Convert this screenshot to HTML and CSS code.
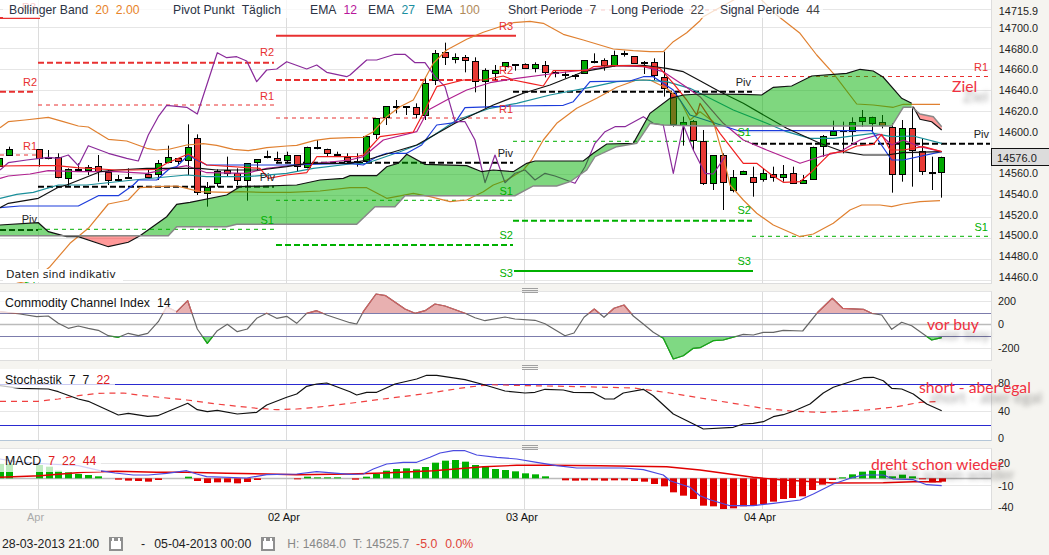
FILE: index.html
```html
<!DOCTYPE html>
<html lang="en">
<head>
    <meta charset="UTF-8">
    <meta name="viewport" content="width=device-width, initial-scale=1.0">
    <title>Chart</title>
    <link rel="stylesheet" href="styles.css">
</head>
<body>
    <div class="panel panel-price">
        <svg class="plot" id="price-plot" viewBox="0 0 991 283"></svg>
        <svg class="axis" id="price-axis" viewBox="991 0 58 283"></svg>
        <div class="legend legend-top">
            <div class="legend-item"><span>Bollinger Band</span><span class="c-orange">20</span><span class="c-orange">2.00</span></div>
            <div class="legend-item"><span>Pivot Punkt</span><span>Täglich</span></div>
            <div class="legend-item"><span>EMA</span><span class="c-magenta">12</span></div>
            <div class="legend-item"><span>EMA</span><span class="c-teal">27</span></div>
            <div class="legend-item"><span>EMA</span><span class="c-tan">100</span></div>
            <div class="legend-item"><span>Short Periode</span><span class="c-grey">7</span></div>
            <div class="legend-item"><span>Long Periode</span><span class="c-grey">22</span></div>
            <div class="legend-item"><span>Signal Periode</span><span class="c-grey">44</span></div>
        </div>
        <div class="disclaimer">Daten sind indikativ</div>
        <div class="last-price">14576.0</div>
        <div class="note note-ziel">Ziel</div>
    </div>

    <div class="gutter"><div class="grip"></div></div>

    <div class="panel panel-cci">
        <svg class="plot" id="cci-plot" viewBox="0 292 991 68"></svg>
        <svg class="axis" id="cci-axis" viewBox="991 292 58 68"></svg>
        <div class="legend legend-sub"><span>Commodity Channel Index</span><span>14</span></div>
        <div class="note note-buy">vor buy</div>
    </div>

    <div class="gutter"><div class="grip"></div></div>

    <div class="panel panel-stoch">
        <svg class="plot" id="stoch-plot" viewBox="0 370 991 71"></svg>
        <svg class="axis" id="stoch-axis" viewBox="991 370 58 71"></svg>
        <div class="legend legend-sub"><span>Stochastik</span><span>7</span><span>7</span><span class="c-red">22</span></div>
        <div class="note note-short">short - aber egal</div>
    </div>

    <div class="gutter"><div class="grip"></div></div>

    <div class="panel panel-macd">
        <svg class="plot" id="macd-plot" viewBox="0 450 991 60"></svg>
        <svg class="axis" id="macd-axis" viewBox="991 450 58 60"></svg>
        <div class="legend legend-sub"><span>MACD</span><span class="c-red">7</span><span class="c-red">22</span><span class="c-red">44</span></div>
        <div class="note note-dreht">dreht schon wieder</div>
    </div>

    <div class="time-axis">
        <span class="tick tick-first">Apr</span>
        <span class="tick">02 Apr</span>
        <span class="tick">03 Apr</span>
        <span class="tick">04 Apr</span>
    </div>

    <div class="footer">
        <span>28-03-2013 21:00</span>
        <svg class="cal" viewBox="0 0 14 14"><rect width="14" height="14" fill="#8f8f8f"/><rect x="2" y="4" width="10" height="8" fill="#fff"/><rect x="3" y="1" width="2" height="3" fill="#fff"/><rect x="9" y="1" width="2" height="3" fill="#fff"/></svg>
        <span class="dash">-</span>
        <span>05-04-2013 00:00</span>
        <svg class="cal" viewBox="0 0 14 14"><rect width="14" height="14" fill="#8f8f8f"/><rect x="2" y="4" width="10" height="8" fill="#fff"/><rect x="3" y="1" width="2" height="3" fill="#fff"/><rect x="9" y="1" width="2" height="3" fill="#fff"/></svg>
        <span class="muted">H: 14684.0</span>
        <span class="muted">T: 14525.7</span>
        <span class="loss">-5.0</span>
        <span class="loss">0.0%</span>
    </div>

    <script src="chart.js"></script>
</body>
</html>
```

FILE: styles.css
```css
body {
    margin: 0;
    width: 1049px;
    height: 555px;
    overflow: hidden;
    background-color: #f5f4f0;
    font-family: "Liberation Sans", Arial, sans-serif;
    font-size: 12px;
    color: #222;
    display: flex;
    flex-direction: column;
}
svg {
    display: block;
}
.panel {
    position: relative;
    display: flex;
    flex: none;
}
.panel-price { height: 283px; }
.panel-cci { height: 68px; }
.panel-stoch { height: 71px; }
.panel-macd { height: 60px; }
.plot {
    width: 991px;
    height: 100%;
    background-color: #fff;
    border-bottom: 1px solid #ddd;
    border-right: 1px solid #ddd;
    box-sizing: content-box;
    flex: none;
}
.panel-cci .plot, .panel-macd .plot {
    border-top: 1px solid #e4e4e4;
    margin-top: -1px;
}
.panel-stoch .plot {
    border-bottom-color: #b4c6d8;
}
.axis {
    width: 57px;
    height: 100%;
    flex: none;
    overflow: visible;
}
.axis text {
    font-size: 11px;
    fill: #222;
}
.gutter {
    height: 9px;
    flex: none;
}
.grip {
    width: 16px;
    height: 5px;
    margin: 5px 0 0 522px;
    position: relative;
    z-index: 1;
    background: repeating-linear-gradient(to bottom, #a0a0a0 0, #a0a0a0 1px, transparent 1px, transparent 2px);
}

/* legends */
.legend {
    position: absolute;
    white-space: nowrap;
    color: #2b3344;
    background-color: rgba(255,255,255,0.75);
}
.legend-top {
    top: 0;
    left: 3px;
    width: 820px;
    height: 18px;
    line-height: 21px;
    padding-left: 6px;
    box-sizing: border-box;
    font-size: 12.2px;
    display: grid;
    grid-template-columns: 164px 137px 58px 58px 82px 103px 109px auto;
}
.legend-item {
    display: flex;
    gap: 7px;
}
.legend-sub {
    top: 0;
    left: 0;
    display: flex;
    gap: 7px;
    padding-left: 5px;
    padding-right: 5px;
    line-height: 15px;
    font-size: 12.3px;
    color: #111;
}
.panel-cci .legend-sub { padding-top: 4px; padding-bottom: 2px; }
.panel-stoch .legend-sub { padding-top: 4px; padding-bottom: 0; }
.panel-macd .legend-sub { padding-top: 5px; padding-bottom: 3px; }
.c-orange { color: #e8842a; }
.c-magenta { color: #b8169a; }
.c-teal { color: #1b8fa0; }
.c-tan { color: #b08a5a; }
.c-grey { color: #444; }
.c-red { color: #e02020; }

.disclaimer {
    position: absolute;
    left: 3px;
    top: 269px;
    width: 120px;
    height: 13px;
    padding-left: 3px;
    box-sizing: border-box;
    background-color: #fff;
    font-family: "DejaVu Sans", Verdana, sans-serif;
    font-size: 11px;
    line-height: 12px;
    white-space: nowrap;
}
.last-price {
    position: absolute;
    left: 991px;
    top: 148px;
    width: 58px;
    height: 18px;
    padding-left: 5px;
    box-sizing: border-box;
    background-color: #dcdcdc;
    border: 1px solid #111;
    border-right: none;
    font-size: 11px;
    line-height: 18px;
}

/* hand written notes */
.note {
    position: absolute;
    font-family: Lato, "Liberation Sans", sans-serif;
    font-size: 15.7px;
    line-height: 18px;
    color: #f03040;
    white-space: nowrap;
    text-shadow: 11px 10px 5px rgba(0,0,0,0.35);
}
.note-ziel { left: 952px; top: 77px; }
.note-buy { left: 927px; top: 23px; }
.note-short { left: 919px; top: 9px; }
.note-dreht { left: 871px; top: 6px; }

/* time axis and footer */
.time-axis {
    display: flex;
    height: 21px;
    flex: none;
    padding-top: 1px;
    box-sizing: border-box;
    line-height: 15px;
    font-size: 11px;
}
.tick {
    width: 238px;
    color: #111;
    flex: none;
}
.tick-first {
    color: #aaa;
    margin-left: 27px;
    width: 241px;
}
.footer {
    display: flex;
    align-items: center;
    height: 25px;
    padding: 2px 0 0 2px;
    box-sizing: border-box;
    font-size: 12.3px;
    color: #222;
}
.cal {
    width: 14px;
    height: 14px;
    margin: 0 18px 0 10px;
    flex: none;
}
.dash {
    margin-right: 9px;
}
.cal + .muted {
    margin-left: -6px;
}
.muted {
    color: #888;
    margin-right: 7px;
    font-size: 12px;
}
.loss {
    color: #e0453a;
    margin-right: 8px;
}

/* chart strokes */
.grid { stroke: #e6e6e6; stroke-width: 1; }
.vgrid { stroke: #dcdcdc; stroke-width: 1; }
.band { stroke: #7c7cac; stroke-width: 1; }
.zero { stroke: #bbb; stroke-width: 1.5; }
.blue-rule { stroke: #2a2ad0; stroke-width: 1; }
.line { fill: none; stroke-width: 1.2; stroke-linejoin: round; }
.l-orange { stroke: #e08030; }
.l-purple { stroke: #8a2a9a; }
.l-red { stroke: #f02020; }
.l-magenta { stroke: #b0208f; }
.l-blue { stroke: #1c3cdb; }
.l-black { stroke: #111; }
.l-teal { stroke: #1a8f9a; }
.l-grey { stroke: #666; }
.l-cci-up { stroke: #d06060; }
.l-cci-down { stroke: #10b010; }
.l-macd-blue { stroke: #4a4ae0; }
.l-macd-red { stroke: #e00000; stroke-width: 1.4; }
.l-dash-red { stroke: #f04040; stroke-dasharray: 6 5; }
.cloud-up { fill: rgba(0,176,0,0.5); stroke: none; }
.cloud-down { fill: rgba(255,0,0,0.4); stroke: none; }
.edge-a { fill: none; stroke: #111; stroke-width: 1.2; }
.edge-b { fill: none; stroke: #888; stroke-width: 1.4; }
.cci-up { fill: #e8b0b0; }
.cci-down { fill: #7fd983; }
.wick { stroke: #000; stroke-width: 1; }
.body { stroke: #000; stroke-width: 1; }
.body-g { fill: #00a800; }
.body-r { fill: #e83a35; }
.body-d { fill: #000; }
.bar-g { fill: #00b000; }
.bar-r { fill: #e00000; }
.piv { fill: none; }
.piv-thin { stroke-width: 1; stroke-dasharray: 4 4; }
.piv-thick { stroke-width: 2; stroke-dasharray: 6 3; }
.piv-solid { stroke-width: 2; }
.piv-red { stroke: #e83030; }
.piv-green { stroke: #00b000; }
.piv-black { stroke: #000; }
.piv-label { font-size: 11px; text-anchor: end; }
.tl-red { fill: #e83030; }
.tl-green { fill: #00b000; }
.tl-black { fill: #222; }
```

FILE: chart.js
```js
// Coordinates below were read off at 3x, so strip() scales them down to page pixels
function strip(xOff, yOff, pts) {
    const out = [];
    for (let i = 0; i < pts.length; i += 2) {
        out.push([xOff + pts[i] / 3, yOff + pts[i + 1] / 3]);
    }
    return out;
}
function pointsAttr(pts) {
    return pts.map(p => p[0].toFixed(1) + ',' + p[1].toFixed(1)).join(' ');
}
function polyline(pts, cls) {
    return `<polyline class="${cls}" points="${pointsAttr(pts)}"/>`;
}
function hline(y, x1, x2, cls) {
    return `<line class="${cls}" x1="${x1}" x2="${x2}" y1="${y}" y2="${y}"/>`;
}
function vlines(y1, y2) {
    return [38.5, 286.5, 524.5, 762.5].map(x =>
        `<line class="vgrid" x1="${x}" x2="${x}" y1="${y1}" y2="${y2}"/>`).join('');
}

// ---- price panel ----
const priceY = p => 26.7 + (14700 - p) * 1.0545;
let price = '';
for (let p = 14460; p <= 14700; p += 20) {
    price += hline(Math.round(priceY(p)) + 0.5, 0, 991, 'grid');
}
price += hline(9.5, 0, 991, 'grid');
price += vlines(0, 283);

// pivot levels: [y, x1, x2, style, colour]
const pivots = [
    [18, 0, 40, 'solid', 'red'], [91.7, 0, 36, 'thick', 'red'], [155, 0, 36, 'thin', 'red'], [230, 0, 38, 'thick', 'black'],
    [62.7, 38, 274, 'thick', 'red'], [105, 38, 274, 'thin', 'red'], [186.7, 38, 274, 'thick', 'black'], [229.3, 38, 274, 'thin', 'green'],
    [35.7, 276, 516, 'solid', 'red'], [80, 276, 513, 'thick', 'red'], [118, 276, 513, 'thin', 'red'], [162.7, 276, 513, 'thick', 'black'],
    [200.3, 276, 513, 'thin', 'green'], [245, 276, 513, 'thick', 'green'],
    [10, 513, 752, 'thin', 'red'], [91.7, 513, 752, 'thick', 'black'], [141.3, 513, 752, 'thin', 'green'],
    [220.7, 513, 752, 'thick', 'green'], [271, 514, 753, 'solid', 'green'],
    [76.5, 752, 990, 'thin', 'red'], [143.7, 752, 990, 'thick', 'black'], [236.3, 752, 990, 'thin', 'green']
];
pivots.forEach(l => {
    price += hline(l[0], l[1], l[2], `piv piv-${l[3]} piv-${l[4]}`);
});

// [x, wickTop, bodyTop, bodyBottom, wickBottom, kind]
const candles = [
    [0, [-3,473,473,497,505,'g'],[28,440,448,465,465,'g'],[116,448,448,476,500,'r'],[145,450,471,474,478,'d'],[175,460,472,532,535,'r'],
        [205,505,508,535,560,'g'],[235,490,507,510,512,'d'],[265,495,500,510,525,'g'],[295,465,497,512,545,'r'],[325,510,517,540,555,'r'],
        [355,525,536,539,545,'d'],[385,505,532,535,535,'d'],[443,505,522,530,535,'r'],[473,480,490,522,540,'g'],[503,437,472,488,490,'g'],
        [533,475,475,485,493,'r'],[563,373,440,480,525,'g'],[592,403,415,576,585,'r'],[622,546,560,577,620,'g'],[652,508,512,547,560,'g'],
        [682,470,510,520,530,'r'],[712,505,520,540,555,'r'],[742,490,490,542,602,'g'],[772,478,478,488,510,'g'],[800,452,469,472,475,'d'],
        [830,455,475,482,490,'r'],[860,455,466,480,490,'g'],[890,466,466,498,515,'r'],[920,440,440,500,505,'g'],[950,420,441,444,448,'d'],
        [980,446,446,458,470,'r'],[1010,455,463,466,470,'d'],[1040,460,470,482,490,'r']],
    [350, [20,460,484,487,500,'d'],[47,408,408,482,490,'g'],[77,355,355,403,417,'g'],[107,318,318,352,375,'g'],[137,300,317,320,340,'d'],
        [167,318,319,322,345,'d'],[197,310,320,342,355,'r'],[226,232,250,345,360,'g'],[256,150,160,240,255,'g'],[286,128,157,172,195,'r'],
        [316,160,170,175,190,'g'],[346,165,170,180,217,'r'],[376,172,184,243,277,'r'],[405,205,210,242,325,'g'],[435,195,210,220,240,'g'],
        [465,187,187,200,213,'g'],[495,193,193,196,212,'d'],[525,190,193,205,207,'r'],[555,187,193,205,217,'g'],[584,183,196,217,232,'r'],
        [614,210,216,219,232,'d'],[644,215,222,225,235,'d'],[674,222,226,229,238,'d'],[703,180,181,220,222,'g'],[733,160,182,185,190,'d'],
        [762,175,181,197,212,'r'],[792,152,166,197,200,'g'],[822,152,160,163,170,'d'],[852,168,168,190,190,'r'],[881,183,186,189,222,'d'],
        [911,175,187,226,240,'r'],[941,155,230,262,290,'r'],[970,278,278,370,380,'r'],[1000,350,365,375,437,'g'],[1030,360,362,418,450,'r']],
    [700, [10,390,422,548,555,'r'],[40,466,466,550,570,'g'],[70,460,466,548,630,'r'],[100,510,530,570,577,'g'],[130,512,512,520,520,'g'],
        [160,500,530,545,590,'r'],[188,505,520,538,545,'g'],[218,500,523,533,545,'r'],[248,495,523,533,545,'g'],[278,500,520,550,550,'r'],
        [308,525,540,548,550,'g'],[338,440,442,538,540,'g'],[368,405,408,437,470,'g'],[398,362,392,403,405,'g'],[428,365,391,394,460,'d'],
        [456,352,367,393,425,'g'],[486,330,352,365,380,'g'],[516,350,350,367,395,'g'],[546,345,367,377,385,'r'],[575,370,380,520,578,'r'],
        [605,360,385,523,545,'g'],[635,320,385,452,560,'r'],[665,415,452,513,525,'r'],[695,470,516,519,570,'d'],[724,470,472,517,593,'g']]
];
candles.forEach(group => {
    const xOff = group[0];
    group.slice(1).forEach(c => {
        const x = Math.round(xOff + c[0] / 3) + 0.5;
        price += `<line class="wick" x1="${x}" x2="${x}" y1="${c[1] / 3}" y2="${c[4] / 3}"/>`;
        const top = Math.round(c[2] / 3) + 0.5;
        const h = Math.max(Math.round((c[3] - c[2]) / 3), 1);
        price += `<rect class="body body-${c[5]}" x="${x - 3}" y="${top}" width="6" height="${h}"/>`;
    });
});

const orangeUp = [].concat(
    strip(0, 0, [0,383,25,365,75,360,145,352,190,365,235,378,265,381,325,418,380,423,440,445,470,450,510,447,560,435,610,431,650,436,700,448,745,452,800,443,860,438,890,436,945,421,990,415,1050,413]),
    strip(350, 0, [40,412,70,395,110,350,150,320,190,300,250,190,290,150,350,118,400,97,450,80,490,68,540,64,580,70,640,103,700,120,790,147,850,152,900,155,940,155,970,125,1010,98,1050,62]),
    strip(700, 0, [10,50,50,28,110,-5,180,-5,230,45,300,100,350,165,400,220,470,312,520,315,580,322,610,313,720,313])
);
const orangeDown = [].concat(
    strip(0, 185, [50,295,100,285,150,245,210,175,265,130,325,57,385,45,420,8,470,5,530,3,600,20,680,22,720,20,790,22,870,22,960,18,1050,8]),
    strip(350, 185, [50,8,110,40,190,25,240,35,300,50,350,45,400,20]),
    strip(350, 0, [430,555,470,540,520,510,545,480,580,420,620,370,680,325,740,295,800,262,860,240,900,240,950,265,990,300,1020,360]),
    strip(700, 0, [0,335,40,365,70,470,90,555]),
    strip(700, 185, [130,45,170,85,220,120,300,155,340,147,400,115,450,75,485,60,540,60,575,65,610,57,660,50,720,47])
);
const purple = [].concat(
    strip(0, 0, [0,510,25,488,80,480,145,472,175,475,205,465,235,497,265,437,325,460,380,475,415,483,445,405,475,350,500,316,560,322,592,342,652,158,680,173,710,170,740,183,770,245,800,210,830,207,860,185,920,207,950,195,980,217,1040,230]),
    strip(350, 0, [0,225,50,180,80,180,135,163,165,163,195,188,225,188,255,230,285,260,315,365,345,365,375,420,405,548,435,465,465,548,495,520,525,510,555,540,585,520,615,528,675,550,705,500,735,430,765,395,795,380,825,380,880,350,910,370,940,375,970,520,1000,375,1030,450,1050,490]),
    strip(700, 0, [15,520,40,522,75,470])
);
const red = [].concat(
    strip(0, 0, [0,498,100,497,170,497,230,503,350,510,400,510,470,508,500,490,565,462,620,495,780,505,805,535,860,525,920,518,950,470,1050,470]),
    strip(350, 0, [20,470,40,465,90,410,190,396,220,340,260,260,340,240,400,240,460,228,490,240,540,250,580,258,610,212,710,212,730,200,790,197,860,197,930,205,970,250,1010,300,1040,345]),
    strip(700, 0, [0,310,60,400,130,490,170,490,215,525,250,547,300,545,335,515,390,460,430,455,470,438,520,433,545,403,570,450,610,450,670,440,725,455])
);
const magenta = [].concat(
    strip(0, 0, [0,535,25,528,90,522,145,512,235,515,350,515,440,520,500,508,560,497,620,518,740,520,800,505,860,498,950,490,1050,480]),
    strip(350, 0, [40,470,100,420,200,395,235,330,290,300,350,270,420,248,500,235,600,222,700,210,800,197,880,200,940,215,1000,255,1050,290]),
    strip(700, 0, [70,370,130,420,200,450,300,490,360,470,420,455,480,420,540,403,575,435,610,420,660,440,725,455])
);
const blue = [].concat(
    strip(0, 185, [0,68,60,63,235,63,295,32,355,32,400,0]),
    strip(0, 0, [415,540,470,540,510,505,530,500,565,465,590,480,620,495,770,495,860,495,1050,490]),
    strip(350, 0, [40,495,80,470,110,460,170,460,215,435,260,375,315,368,345,323,490,318,640,316,670,305,720,245,840,243,880,230,910,230,970,270,1020,345]),
    strip(700, 0, [115,392,515,392,575,480,610,480,725,455])
);
const black = [].concat(
    strip(0, 185, [0,68,25,55,115,40,175,7,200,0]),
    strip(0, 0, [300,515,350,510,440,505,600,505,650,510,780,510,860,500,920,490,1050,490]),
    strip(350, 0, [50,480,100,465,200,435,315,370,430,315,520,280,600,255,700,215,800,197,880,196,950,205,1000,215,1050,242]),
    strip(700, 0, [60,275,130,310,260,385,360,430,430,455,490,465,560,465,610,458,725,455])
);
const teal = [].concat(
    strip(0, 185, [0,40,50,28,100,22,175,0]),
    strip(0, 0, [260,555,400,540,560,525,620,530,740,530,860,520,940,505,1050,492]),
    strip(350, 0, [50,490,150,455,215,430,320,360,420,325,500,310,600,285,720,262,800,245,880,240,950,245,1020,265,1050,280]),
    strip(700, 0, [100,330,200,370,260,395,330,415,400,415,520,400,575,410,640,408,725,430])
);
[[orangeUp,'l-orange'],[orangeDown,'l-orange'],[teal,'l-teal'],[magenta,'l-magenta'],[blue,'l-blue'],[black,'l-black'],[purple,'l-purple'],[red,'l-red']].forEach(l => {
    price += polyline(l[0], 'line ' + l[1]);
});

// ichimoku cloud, drawn over the candles so they tint through it
const cloudA = [].concat(
    strip(0, 185, [0,120,115,113,145,140,200,155,235,155]),
    strip(0, 185, [325,185,385,172,420,152,500,95,530,58,570,52,680,30,720,5]),
    strip(0, 0, [890,555,960,540,1030,535]),
    strip(350, 0, [0,527,80,527,110,500,145,490,170,463,225,493,350,497,395,515,430,510,490,515,530,490,555,483,700,483,730,460,770,432,850,430,900,340,960,295,1000,285]),
    strip(700, 0, [0,282,130,283,185,285,220,262,275,258,335,228,440,220,480,208,520,213,550,232,605,295,635,310])
);
const cloudB = [].concat(
    strip(0, 185, [0,152,235,152,420,152,505,152,530,125,680,125,710,118]),
    strip(350, 185, [20,118,75,65,135,65,165,32,495,32,550,3,620,3]),
    strip(350, 0, [660,545,710,510,735,470,800,440,860,430,900,370,940,375,1050,378]),
    strip(700, 0, [575,378,610,322,635,322])
);
const sideA = cloudA.filter(p => p[0] <= 78 || p[0] >= 140);
const sideB = cloudB.filter(p => p[0] <= 78 || p[0] >= 140);
price += `<polygon class="cloud-up" points="${pointsAttr(sideA.concat(sideB.slice().reverse()))}"/>`;
price += `<polygon class="cloud-down" points="${pointsAttr(strip(0, 185, [235,153,325,185,385,172,420,153]))}"/>`;
price += `<polygon class="cloud-down" points="${pointsAttr(strip(700, 0, [636,315,660,342,700,350,725,380,725,390,695,365,660,358,640,320]))}"/>`;
price += polyline(cloudA, 'edge-a');
price += polyline(cloudB, 'edge-b');
price += polyline(strip(700, 0, [640,320,660,358,695,365,725,390]), 'edge-a');
price += polyline(strip(700, 0, [636,322,660,342,700,350,725,380]), 'edge-b');

// pivot labels: [text, right edge, baseline, colour]
const pivotLabels = [
    ['R3',36,11,'red'],['R2',37,86,'red'],['R1',37,150,'red'],['Piv',37,223,'black'],
    ['R2',274,56,'red'],['R1',274,100,'red'],['Piv',275,181,'black'],['S1',274,224,'green'],
    ['R3',513,30,'red'],['R2',513,74,'red'],['R1',513,113,'red'],['Piv',513,157,'black'],['S1',513,195,'green'],['S2',513,239,'green'],['S3',513,277,'green'],
    ['Piv',751,86,'black'],['S1',751,136,'green'],['S2',751,214,'green'],['S3',751,265,'green'],
    ['R1',988,71,'red'],['Piv',989,138,'black'],['S1',988,231,'green'],['S1',37,287,'green']
];
pivotLabels.forEach(l => {
    price += `<text class="piv-label tl-${l[3]}" x="${l[1]}" y="${l[2]}">${l[0]}</text>`;
});
document.getElementById('price-plot').innerHTML = price;

function axisLabels(list, x) {
    return list.map(l => `<text x="${x}" y="${l[1]}">${l[0]}</text>`).join('');
}
const priceLabels = [['14715.9', 12.7]];
for (let p = 14700, y = 30; p >= 14460; p -= 20, y += 21.1) {
    if (p !== 14580) priceLabels.push([p.toFixed(1), y]);
}
document.getElementById('price-axis').innerHTML = axisLabels(priceLabels, 998);

// ---- CCI panel ----
const cciLine = [].concat(
    strip(0, 185, [0,380,60,387,110,395,145,393,175,415,205,430,235,423,265,430,295,436,325,452,355,457,385,445,415,452,443,445,475,410,500,365,530,380,563,347,592,432,622,475,652,437,682,418,712,440,742,432,770,400,800,385,830,400,860,394,890,415,920,385,950,377,980,390,1050,413]),
    strip(350, 185, [20,417,40,380,78,327,107,332,165,372,195,385,225,377,255,357,285,363,345,385,375,398,405,407,465,396,495,402,555,406,585,416,645,452,672,444,702,397,733,372,762,397,792,370,822,360,850,393,880,417,910,442,940,460,970,522,1000,512,1030,490,1050,488]),
    strip(700, 185, [40,467,70,465,130,448,160,450,190,442,220,442,250,436,308,438,355,380,397,340,428,370,490,373,515,385,545,390,575,433,605,412,635,422,695,465,725,458])
);
const CCI_HI = 313.5, CCI_LO = 336.5;
let cci = `<defs>
    <clipPath id="above"><rect x="0" y="292" width="991" height="${CCI_HI - 292}"/></clipPath>
    <clipPath id="below"><rect x="0" y="${CCI_LO}" width="991" height="${360 - CCI_LO}"/></clipPath>
</defs>`;
[301.5, 348.5].forEach(y => { cci += hline(y, 0, 991, 'grid'); });
cci += vlines(292, 360);
cci += hline(324.5, 0, 991, 'zero');
const first = cciLine[0], last = cciLine[cciLine.length - 1];
const areaAbove = cciLine.concat([[last[0], CCI_HI], [first[0], CCI_HI]]);
const areaBelow = cciLine.concat([[last[0], CCI_LO], [first[0], CCI_LO]]);
cci += `<polygon class="cci-up" clip-path="url(#above)" points="${pointsAttr(areaAbove)}"/>`;
cci += `<polygon class="cci-down" clip-path="url(#below)" points="${pointsAttr(areaBelow)}"/>`;
cci += hline(CCI_HI, 0, 991, 'band') + hline(CCI_LO, 0, 991, 'band');
cci += polyline(cciLine, 'line l-grey');
cci += `<polyline class="line l-cci-up" clip-path="url(#above)" points="${pointsAttr(cciLine)}"/>`;
cci += `<polyline class="line l-cci-down" clip-path="url(#below)" points="${pointsAttr(cciLine)}"/>`;
document.getElementById('cci-plot').innerHTML = cci;
document.getElementById('cci-axis').innerHTML = axisLabels([['200', 304.7], ['0', 328.3], ['-200', 352.3]], 997);

// ---- stochastic panel ----
const stochK = [].concat(
    strip(0, 370, [0,50,60,58,145,60,175,68,235,90,265,97,355,138,385,133,443,142,473,140,563,103,592,122,622,128,652,124,712,135,770,130,800,108,860,85,890,75,920,52,950,45,980,42,1050,68]),
    strip(350, 370, [20,78,50,70,80,70,135,45,200,30,230,19,260,19,345,32,405,48,465,66,525,72,555,70,585,61,640,63,670,70,730,71,765,90,792,90,820,72,880,61,910,80,970,135,1050,175]),
    strip(700, 370, [10,180,100,175,130,165,160,163,190,158,220,143,250,137,280,127,330,105,370,72,400,55,460,35,490,26,520,25,550,35,575,58,605,60,640,75,680,105,725,125])
);
const stochD = [].concat(
    strip(0, 370, [0,97,115,97,175,90,235,80,295,73,370,72,430,80,560,93,650,105,770,118,830,122,890,120,950,115,1050,103]),
    strip(350, 370, [100,90,220,75,350,55,420,47,540,50,700,53,850,57,960,72,1050,87]),
    strip(700, 370, [100,103,190,118,280,127,370,130,500,123,590,113,660,100,720,97])
);
let stoch = hline(412.5, 0, 991, 'grid') + vlines(370, 441);
stoch += hline(385.5, 0, 991, 'blue-rule') + hline(426.5, 0, 991, 'blue-rule');
stoch += polyline(stochD, 'line l-dash-red') + polyline(stochK, 'line l-black');
document.getElementById('stoch-plot').innerHTML = stoch;
document.getElementById('stoch-axis').innerHTML = axisLabels([['80', 388], ['40', 416.3], ['0', 443.3]], 997);

// ---- MACD panel ----
// bars as [x, y] in 3x coordinates, measured against the zero line at 328
const bars = [
    [0, [0,285],[27,285],[116,288],[146,293],[175,305],[205,310],[235,315],[265,318],[295,322],[355,332],[385,335],[414,336],[443,338],[473,333],[563,323],[592,336],[622,342],[652,340],[682,340],[712,343],[742,339],[772,333],[890,331],[920,323],[950,325],[980,325],[1010,325]],
    [350, [15,332],[47,323],[78,315],[108,305],[137,300],[167,298],[197,301],[226,294],[256,281],[286,275],[316,273],[346,278],[376,288],[405,293],[435,300],[465,303],[494,307],[524,313],[554,316],[584,322],[644,334],[674,335],[703,334],[733,334],[763,335],[793,334],[822,334],[852,336],[881,338],[911,345],[941,352],[970,370],[1000,380],[1030,390]],
    [700, [8,410],[38,412],[68,420],[98,418],[128,412],[158,410],[188,405],[218,398],[248,390],[277,387],[307,382],[337,363],[367,347],[397,333],[427,325],[456,316],[486,308],[516,305],[546,305],[575,322],[605,317],[635,322],[665,331],[695,340],[725,338]]
];
let macd = hline(464.5, 0, 991, 'grid') + hline(486.5, 0, 991, 'grid') + vlines(450, 510);
macd += hline(479.5, 0, 991, 'zero');
bars.forEach(group => {
    group.slice(1).forEach(b => {
        const x = Math.round(group[0] + b[0] / 3) - 3;
        const y = 370 + b[1] / 3, zero = 370 + 328 / 3;
        const up = y < zero;
        macd += `<rect class="${up ? 'bar-g' : 'bar-r'}" x="${x}" y="${Math.min(y, zero)}" width="7" height="${Math.abs(y - zero)}"/>`;
    });
});
const macdBlue = [].concat(
    strip(0, 370, [0,270,60,280,145,285,235,290,300,305,345,312,400,318,445,318,500,313,560,305,590,315,620,323,740,327,800,317,890,315,950,308,1050,316]),
    strip(350, 370, [40,315,70,300,110,285,160,280,200,280,240,265,270,252,310,245,345,245,380,258,440,265,500,270,560,280,620,290,680,297,760,297,820,297,880,302,940,318,960,335,1020,355,1050,380]),
    strip(700, 370, [30,392,90,410,160,410,220,403,300,393,340,375,400,345,460,325,490,318,550,318,580,330,640,332,680,347,725,350])
);
const macdRed = [].concat(
    strip(0, 370, [0,325,120,320,250,310,350,307,470,310,560,310,680,313,800,315,890,317,1050,315]),
    strip(350, 370, [100,312,250,305,400,293,500,289,600,289,750,290,950,293,1050,303]),
    strip(700, 370, [160,325,240,332,400,342,550,341,640,338,725,338])
);
macd += polyline(macdRed, 'line l-macd-red') + polyline(macdBlue, 'line l-macd-blue');
document.getElementById('macd-plot').innerHTML = macd;
document.getElementById('macd-axis').innerHTML = axisLabels([['20', 467.3], ['-10', 490.7], ['-40', 512.3]], 997);
```
